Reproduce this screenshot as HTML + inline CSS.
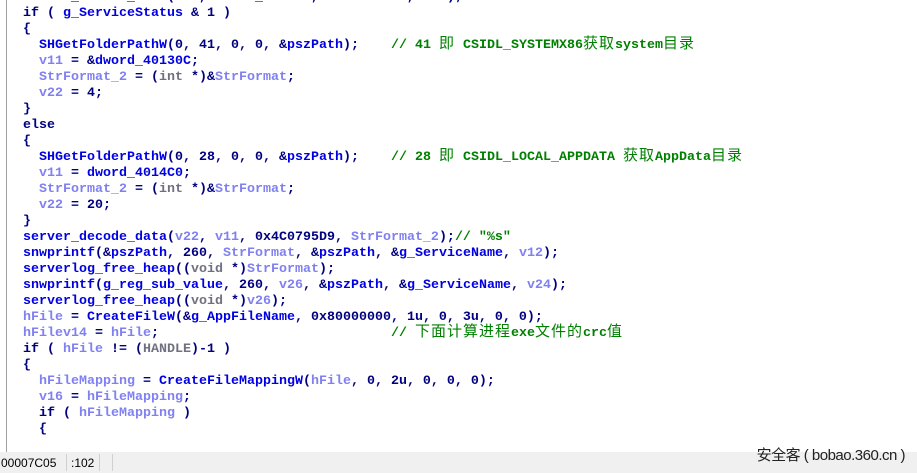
<!DOCTYPE html>
<html><head><meta charset="utf-8"><style>
html,body{margin:0;padding:0;width:917px;height:473px;overflow:hidden;background:#fff}
#g{position:absolute;left:0;top:0;width:6px;height:452px;border-right:1px solid #a0a0a0;background:#fff;overflow:hidden}
pre{position:absolute;left:23px;top:-10px;margin:0;font:bold 13.33px/16px "Liberation Mono","Noto Sans CJK SC",monospace;color:#000080;white-space:pre}
.f{color:#0000e0}.v{color:#8080f0}.c{color:#008000}.t{color:#707080}
.z{font-family:"Noto Sans CJK SC",sans-serif;font-weight:normal;font-size:15px;letter-spacing:1px;line-height:10px}
#s{position:absolute;left:0;top:452px;width:917px;height:21px;background:#f0f0f0;font:12px "Liberation Sans",sans-serif;color:#000}
#s span{position:absolute;top:4px}
.sep{position:absolute;top:2px;width:1px;height:17px;background:#d0d0d0}
#w{position:absolute;right:12px;top:444px;font:15px "Liberation Sans","Noto Sans CJK SC",sans-serif;color:#222;letter-spacing:-0.5px}
</style></head><body>
<div id="g"></div>
<pre><span class="f">server_decode_data</span>(<span class="v">v20</span>, <span class="f">dword_401010</span>, 0x4C07950D, <span class="v">v20</span>);<span class="c">// "%s\\msc</span>
if ( <span class="f">g_ServiceStatus</span> &amp; 1 )
{
  <span class="f">SHGetFolderPathW</span>(0, 41, 0, 0, &amp;<span class="f">pszPath</span>);    <span class="c">// 41 <span class="z">即</span> CSIDL_SYSTEMX86<span class="z">获取</span>system<span class="z">目录</span></span>
  <span class="v">v11</span> = &amp;<span class="f">dword_40130C</span>;
  <span class="v">StrFormat_2</span> = (<span class="t">int</span> *)&amp;<span class="v">StrFormat</span>;
  <span class="v">v22</span> = 4;
}
else
{
  <span class="f">SHGetFolderPathW</span>(0, 28, 0, 0, &amp;<span class="f">pszPath</span>);    <span class="c">// 28 <span class="z">即</span> CSIDL_LOCAL_APPDATA <span class="z">获取</span>AppData<span class="z">目录</span></span>
  <span class="v">v11</span> = <span class="f">dword_4014C0</span>;
  <span class="v">StrFormat_2</span> = (<span class="t">int</span> *)&amp;<span class="v">StrFormat</span>;
  <span class="v">v22</span> = 20;
}
<span class="f">server_decode_data</span>(<span class="v">v22</span>, <span class="v">v11</span>, 0x4C0795D9, <span class="v">StrFormat_2</span>);<span class="c">// "%s"</span>
<span class="f">snwprintf</span>(&amp;<span class="f">pszPath</span>, 260, <span class="v">StrFormat</span>, &amp;<span class="f">pszPath</span>, &amp;<span class="f">g_ServiceName</span>, <span class="v">v12</span>);
<span class="f">serverlog_free_heap</span>((<span class="t">void</span> *)<span class="v">StrFormat</span>);
<span class="f">snwprintf</span>(<span class="f">g_reg_sub_value</span>, 260, <span class="v">v26</span>, &amp;<span class="f">pszPath</span>, &amp;<span class="f">g_ServiceName</span>, <span class="v">v24</span>);
<span class="f">serverlog_free_heap</span>((<span class="t">void</span> *)<span class="v">v26</span>);
<span class="v">hFile</span> = <span class="f">CreateFileW</span>(&amp;<span class="f">g_AppFileName</span>, 0x80000000, 1u, 0, 3u, 0, 0);
<span class="v">hFilev14</span> = <span class="v">hFile</span>;                             <span class="c">// <span class="z">下面计算进程</span>exe<span class="z">文件的</span>crc<span class="z">值</span></span>
if ( <span class="v">hFile</span> != (<span class="t">HANDLE</span>)-1 )
{
  <span class="v">hFileMapping</span> = <span class="f">CreateFileMappingW</span>(<span class="v">hFile</span>, 0, 2u, 0, 0, 0);
  <span class="v">v16</span> = <span class="v">hFileMapping</span>;
  if ( <span class="v">hFileMapping</span> )
  {
</pre>
<div id="s"><span style="left:1px">00007C05</span><div class="sep" style="left:66px"></div><span style="left:71px">:102</span><div class="sep" style="left:99px"></div><div class="sep" style="left:112px"></div></div>
<div id="w">安全客 ( bobao.360.cn )</div>
</body></html>
